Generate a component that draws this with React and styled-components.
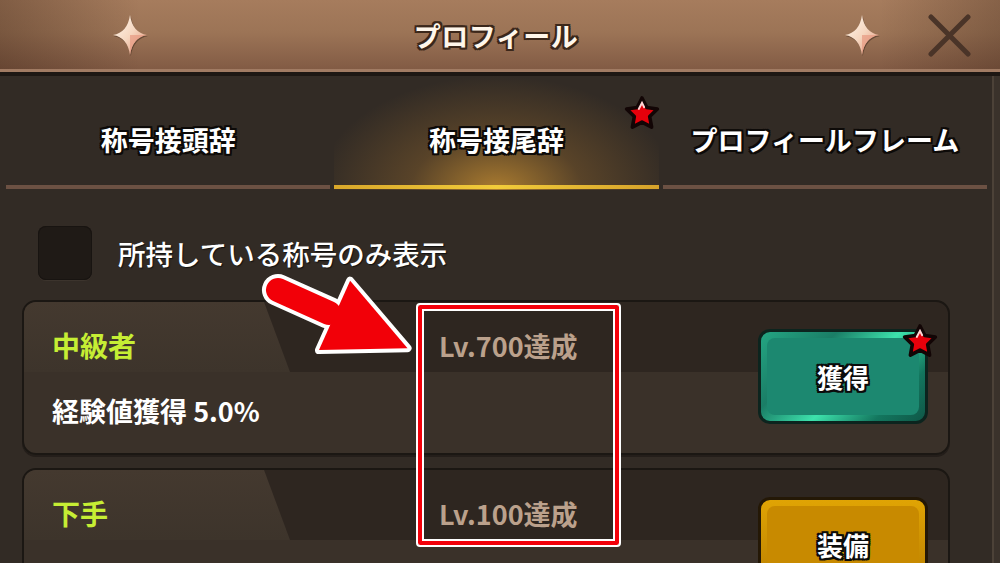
import styled, { createGlobalStyle, css } from "styled-components";

const GlobalStyle = createGlobalStyle`
  html, body {
    margin: 0;
    padding: 0;
    background: #322b25;
  }
  body {
    font-family: "Noto Sans CJK JP", "Noto Sans", sans-serif;
  }
`;

const outline = (color, w = 2) => css`
  text-shadow:
    ${w}px 0 0 ${color}, -${w}px 0 0 ${color}, 0 ${w}px 0 ${color}, 0 -${w}px 0 ${color},
    ${w}px ${w}px 0 ${color}, -${w}px ${w}px 0 ${color}, ${w}px -${w}px 0 ${color},
    -${w}px -${w}px 0 ${color};
`;

const titles = [
  {
    name: "中級者",
    effect: "経験値獲得 5.0%",
    cond: "Lv.700達成",
    action: "獲得",
    variant: "green",
    badge: true,
  },
  {
    name: "下手",
    cond: "Lv.100達成",
    action: "装備",
    variant: "gold",
    badge: false,
  },
];

function Sparkle() {
  return (
    <svg width="36" height="42" viewBox="0 0 36 42">
      <defs>
        <linearGradient id="spk" x1="0" y1="0" x2="1" y2="1">
          <stop offset="0" stopColor="#fffaf2" />
          <stop offset="0.5" stopColor="#f6d7c0" />
          <stop offset="1" stopColor="#de8c72" />
        </linearGradient>
      </defs>
      <path
        d="M18 1 Q20.5 18.5 35 21 Q20.5 23.5 18 41 Q15.5 23.5 1 21 Q15.5 18.5 18 1Z"
        fill="#3a2519"
        opacity="0.5"
        transform="translate(0.8 1.2)"
      />
      <path
        d="M18 1 Q20.5 18.5 35 21 Q20.5 23.5 18 41 Q15.5 23.5 1 21 Q15.5 18.5 18 1Z"
        fill="url(#spk)"
      />
      <path d="M18 21 L35 21 Q20.5 23.5 18 41Z" fill="#e79a82" opacity="0.7" />
    </svg>
  );
}

function CloseIcon() {
  return (
    <svg width="43" height="43" viewBox="0 0 43 43">
      <path
        d="M3 3 L40 40 M40 3 L3 40"
        stroke="#4a3428"
        strokeWidth="5"
        strokeLinecap="round"
      />
    </svg>
  );
}

function RedStar({ size = 36 }) {
  return (
    <svg width={size} height={size} viewBox="0 0 30 30">
      <polygon
        points="15,2.5 19,10.4 27.8,11.7 21.4,17.9 23,26.8 15,22.6 7,26.8 8.6,17.9 2.2,11.7 11,10.4"
        fill="#e6000b"
        stroke="#120505"
        strokeWidth="3"
        strokeLinejoin="round"
      />
      <path
        d="M12.3 11.6 L15 6.6 L16.8 10.2"
        stroke="#ffd6d6"
        strokeWidth="1.6"
        fill="none"
        strokeLinecap="round"
      />
    </svg>
  );
}

function Arrow() {
  return (
    <ArrowLayer width="1000" height="563" viewBox="0 0 1000 563">
      <g transform="translate(278 290) rotate(24.2)">
        <g stroke="#ffffff" strokeWidth="8" strokeLinejoin="round" fill="#ffffff">
          <rect x="-12" y="-12" width="80" height="24" rx="12" />
          <polygon points="62,-38 142,0 62,38" />
        </g>
        <g fill="#f20008">
          <rect x="-12" y="-12" width="80" height="24" rx="12" />
          <polygon points="62,-38 142,0 62,38" />
        </g>
      </g>
    </ArrowLayer>
  );
}

export default function App() {
  return (
    <>
      <GlobalStyle />
      <Page>
        <Header>
          <span />
          <Sparkle />
          <Title>プロフィール</Title>
          <Sparkle />
          <span />
          <CloseIcon />
        </Header>
        <Body>
          <Tabs>
            <Tab>
              <TabLabel>称号接頭辞</TabLabel>
              <TabLine />
            </Tab>
            <Tab $active>
              <TabLabel>称号接尾辞</TabLabel>
              <TabLine $active />
              <TabBadge>
                <RedStar />
              </TabBadge>
            </Tab>
            <Tab>
              <TabLabel>プロフィールフレーム</TabLabel>
              <TabLine />
            </Tab>
          </Tabs>
          <FilterRow>
            <Checkbox />
            <FilterLabel>所持している称号のみ表示</FilterLabel>
          </FilterRow>
          <CardList>
            {titles.map((t) => (
              <Card key={t.name}>
                <CardName>{t.name}</CardName>
                <Condition>{t.cond}</Condition>
                <ActionButton $variant={t.variant}>
                  <ButtonFace $variant={t.variant}>{t.action}</ButtonFace>
                  {t.badge && (
                    <ButtonBadge>
                      <RedStar />
                    </ButtonBadge>
                  )}
                </ActionButton>
                {t.effect && <Effect>{t.effect}</Effect>}
              </Card>
            ))}
          </CardList>
        </Body>
        <Arrow />
        <Highlight />
      </Page>
    </>
  );
}

const Page = styled.div`
  position: relative;
  width: 1000px;
  height: 563px;
  overflow: hidden;
  display: flex;
  flex-direction: column;
  background: #322b25;
`;

const Header = styled.header`
  flex: none;
  height: 70px;
  display: grid;
  grid-template-columns: 112px 36px 1fr 36px 48px 43px 29px;
  align-items: center;
  padding-bottom: 2px;
  background:
    linear-gradient(to right, rgba(40, 20, 10, 0.3), rgba(40, 20, 10, 0) 14%, rgba(40, 20, 10, 0) 88%, rgba(40, 20, 10, 0.25)),
    linear-gradient(to bottom, #a67c5d 0%, #9c7456 45%, #805943 100%);
  border-bottom: 4px solid #1d1713;
  box-shadow: inset 0 -3px 0 #a17b63;
`;

const Title = styled.h1`
  margin: 0;
  text-align: center;
  font-size: 27px;
  font-weight: 700;
  color: #fff6ea;
  letter-spacing: 0.5px;
  ${outline("#3b271a", 2)}
`;

const Body = styled.main`
  flex: 1;
  display: flex;
  flex-direction: column;
  border-right: 6px solid #3a322b;
  box-shadow: inset -2px 0 0 #4c4238;
`;

const Tabs = styled.nav`
  display: grid;
  grid-template-columns: repeat(3, 1fr);
  gap: 4px;
  padding: 0 7px 0 6px;
  height: 114px;
`;

const Tab = styled.div`
  position: relative;
  display: flex;
  flex-direction: column;
  ${(p) =>
    p.$active &&
    css`
      background: radial-gradient(
        ellipse 55% 100% at 50% 100%,
        rgba(222, 158, 52, 0.7) 0%,
        rgba(170, 118, 48, 0.32) 48%,
        rgba(60, 45, 35, 0) 100%
      );
    `}
`;

const TabLabel = styled.div`
  flex: 1;
  display: flex;
  align-items: center;
  justify-content: center;
  padding-top: 18px;
  font-size: 27px;
  font-weight: 700;
  color: #ffffff;
  ${outline("#0d0a08", 2)}
`;

const TabLine = styled.div`
  height: 4px;
  margin-bottom: 1px;
  background: ${(p) =>
    p.$active
      ? "linear-gradient(to right, #d9a72a, #f2cc3a 50%, #d6a22a)"
      : "#6c5143"};
`;

const TabBadge = styled.div`
  position: absolute;
  top: 19px;
  right: -1px;
  width: 36px;
  height: 36px;
`;

const FilterRow = styled.div`
  display: flex;
  align-items: center;
  gap: 26px;
  margin-top: 36px;
  padding-left: 38px;
`;

const Checkbox = styled.div`
  width: 54px;
  height: 54px;
  border-radius: 8px;
  background: #1f1a16;
  box-shadow: inset 0 0 0 1px #181411, 0 1px 0 #3c342d;
`;

const FilterLabel = styled.span`
  font-size: 27.5px;
  font-weight: 500;
  color: #ffffff;
  text-shadow: 1px 1px 1px #111;
`;

const CardList = styled.div`
  display: flex;
  flex-direction: column;
  gap: 13px;
  margin-top: 20px;
  padding-left: 22px;
  width: 928px;
`;

const Card = styled.section`
  position: relative;
  height: 155px;
  box-sizing: border-box;
  display: grid;
  grid-template-columns: 387px 1fr 170px;
  grid-template-rows: 48px 1fr;
  padding: 19px 20px 0 28px;
  border-radius: 14px;
  border: 2px solid #1b1713;
  background: linear-gradient(to bottom, #2e2620 0, #2e2620 70px, #3a3129 70px);
  box-shadow: 0 2px 0 #241e1a;
  overflow: hidden;

  &::before {
    content: "";
    position: absolute;
    left: 0;
    top: 0;
    width: 268px;
    height: 70px;
    background: linear-gradient(to bottom, #44392f, #3d342b);
    clip-path: polygon(0 0, 240px 0, 266px 70px, 0 70px);
  }

  & > * {
    position: relative;
  }
`;

const CardName = styled.h2`
  margin: 0;
  align-self: center;
  font-size: 28px;
  font-weight: 700;
  color: #c6ee34;
`;

const Condition = styled.div`
  align-self: center;
  font-size: 27px;
  font-weight: 700;
  color: #bba18c;
`;

const Effect = styled.div`
  grid-column: 1 / 3;
  margin-top: 24px;
  line-height: 36px;
  font-size: 27px;
  font-weight: 700;
  color: #ffffff;
`;

const variants = {
  green: {
    rim: "linear-gradient(135deg, #24a683 0%, #1a7d66 30%, #3de2ac 55%, #13765e 80%, #0f5747 100%)",
    face: "#1c8870",
    edge: "#0c241e",
  },
  gold: {
    rim: "linear-gradient(to bottom, #e0a404 0%, #b97e00 100%)",
    face: "#c88a00",
    edge: "#241806",
  },
};

const ActionButton = styled.div`
  grid-column: 3;
  grid-row: 1 / 3;
  align-self: start;
  position: relative;
  margin-top: 8px;
  height: 95px;
  box-sizing: border-box;
  padding: 6px;
  border-radius: 12px;
  border: 3px solid ${(p) => variants[p.$variant].edge};
  background: ${(p) => variants[p.$variant].rim};
  display: flex;
`;

const ButtonFace = styled.div`
  flex: 1;
  display: flex;
  align-items: center;
  justify-content: center;
  border-radius: 8px;
  background: ${(p) => variants[p.$variant].face};
  font-size: 26px;
  font-weight: 700;
  color: #ffffff;
  ${outline("#0b0b0b", 2)}
`;

const ButtonBadge = styled.div`
  position: absolute;
  top: -9px;
  right: -13px;
  width: 36px;
  height: 36px;
`;

const ArrowLayer = styled.svg`
  position: absolute;
  left: 0;
  top: 0;
  pointer-events: none;
`;

const Highlight = styled.div`
  position: absolute;
  left: 416px;
  top: 303px;
  width: 205px;
  height: 244px;
  box-sizing: border-box;
  border: 2px solid #ffffff;
  border-radius: 4px;
  box-shadow: inset 0 0 0 4px #f2000a, inset 0 0 0 6px #ffffff;
  pointer-events: none;
`;
